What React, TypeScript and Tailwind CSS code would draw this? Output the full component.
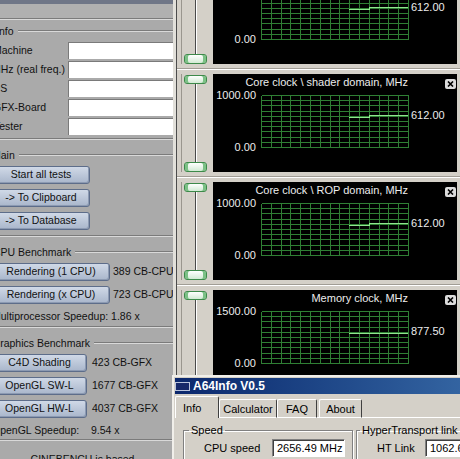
import React from "react"

const ui = "font-['Liberation_Sans',Arial,sans-serif]"

// etched separator line (dark over light)
function Etch() {
  return <div className="h-[2px] border-t border-t-[#7b7b7b] border-b border-b-[#d9d9d9]" />
}

function Heading({ text, cls }: { text: string; cls: string }) {
  return (
    <div className="flex items-center h-[14px] gap-[4px] shrink-0">
      <span className={`whitespace-nowrap leading-[14px] ${cls}`}>{text}</span>
      <div className="flex-1">
        <Etch />
      </div>
    </div>
  )
}

function CbButton({ label, w }: { label: string; w: string }) {
  return (
    <div
      className={`h-[18px] -ml-[8px] ${w} shrink-0 flex items-center justify-center rounded-[3px] border border-[#5d6d8a] bg-linear-to-b from-[#d0d9e7] to-[#a9b6cb] shadow-[inset_-1px_-1px_0_#8c9ab2] whitespace-nowrap`}
    >
      {label}
    </div>
  )
}

const infoRows = [
  { label: "Machine", cls: "-ml-[7px]" },
  { label: "MHz (real freq.)", cls: "-ml-[8px]" },
  { label: "OS", cls: "-ml-[8px]" },
  { label: "GFX-Board", cls: "-ml-[7px]" },
  { label: "Tester", cls: "-ml-[6px]" },
]

function Cinebench() {
  return (
    <div className="w-[173px] shrink-0 bg-[#aaaaaa] text-[#111] text-[10.5px] flex flex-col overflow-hidden">
      <div className="h-[4px] bg-[#6f7687] shrink-0" />
      <div className="h-[14px] bg-[#b0b0b0] shrink-0" />
      <Etch />

      {/* INFO */}
      <div className="mt-[4px]">
        <Heading text="Info" cls="-ml-[4px]" />
      </div>
      <div className="mt-[4px] flex flex-col gap-[2px]">
        {infoRows.map((r) => (
          <div key={r.label} className="flex h-[17px] items-center">
            <div className="w-[68px] overflow-hidden whitespace-nowrap">
              <span className={`inline-block ${r.cls}`}>{r.label}</span>
            </div>
            <div className="flex-1 h-full bg-white border-t border-l border-[#7a7a7a]" />
          </div>
        ))}
      </div>
      <div className="mt-[3px]">
        <Etch />
      </div>

      {/* MAIN */}
      <div className="mt-[8px]">
        <Heading text="Main" cls="-ml-[8px]" />
      </div>
      <div className="mt-[4px] flex flex-col gap-[5px]">
        <CbButton label="Start all tests" w="w-[98px]" />
        <CbButton label="-> To Clipboard" w="w-[98px]" />
        <CbButton label="-> To Database" w="w-[98px]" />
      </div>
      <div className="mt-[5px]">
        <Etch />
      </div>

      {/* CPU */}
      <div className="mt-[8px]">
        <Heading text="CPU Benchmark" cls="-ml-[7px]" />
      </div>
      <div className="mt-[4px] flex flex-col gap-[5px]">
        <div className="flex items-center gap-[3px]">
          <CbButton label="Rendering (1 CPU)" w="w-[118px]" />
          <span className="whitespace-nowrap">389 CB-CPU</span>
        </div>
        <div className="flex items-center gap-[3px]">
          <CbButton label="Rendering (x CPU)" w="w-[118px]" />
          <span className="whitespace-nowrap">723 CB-CPU</span>
        </div>
      </div>
      <div className="mt-[5px] h-[14px] leading-[14px] whitespace-nowrap">
        <span className="inline-block -ml-[8px]">Multiprocessor Speedup: 1.86 x</span>
      </div>
      <div className="mt-[3px]">
        <Etch />
      </div>

      {/* GFX */}
      <div className="mt-[8px]">
        <Heading text="Graphics Benchmark" cls="-ml-[8px]" />
      </div>
      <div className="mt-[4px] flex flex-col gap-[5px]">
        <div className="flex items-center gap-[5px]">
          <CbButton label="C4D Shading" w="w-[95px]" />
          <span className="whitespace-nowrap">423 CB-GFX</span>
        </div>
        <div className="flex items-center gap-[5px]">
          <CbButton label="OpenGL SW-L" w="w-[95px]" />
          <span className="whitespace-nowrap">1677 CB-GFX</span>
        </div>
        <div className="flex items-center gap-[5px]">
          <CbButton label="OpenGL HW-L" w="w-[95px]" />
          <span className="whitespace-nowrap">4037 CB-GFX</span>
        </div>
      </div>
      <div className="mt-[5px] h-[14px] leading-[14px] flex whitespace-nowrap">
        <span className="inline-block -ml-[8px] w-[99px] shrink-0">OpenGL Speedup:</span>
        <span>9.54 x</span>
      </div>
      <div className="mt-[2px]">
        <Etch />
      </div>
      <div className="mt-[11px] h-[14px] leading-[14px] text-center pr-[8px] whitespace-nowrap">
        CINEBENCH is based
      </div>
    </div>
  )
}

// ---------- RivaTuner style monitor ----------

const graphs = [
  { title: "Core clock, MHz", max: "1000.00", value: "612.00", level: 0.612, step: true },
  { title: "Core clock \\ shader domain, MHz", max: "1000.00", value: "612.00", level: 0.612, step: true },
  { title: "Core clock \\ ROP domain, MHz", max: "1000.00", value: "612.00", level: 0.612, step: true },
  { title: "Memory clock, MHz", max: "1500.00", value: "877.50", level: 0.585, step: false },
]

function Chart({ level, step }: { level: number; step: boolean }) {
  const W = 147
  const H = 52
  const y = Math.round(H * (1 - level)) + 0.5
  const pts = step
    ? `88,${y + 2} 108,${y + 2} 108,${y} ${W},${y}`
    : `88,${y} ${W},${y}`
  return (
    <svg width={W + 1} height={H + 1} className="block" shapeRendering="crispEdges">
      {Array.from({ length: 16 }, (_, i) => {
        const x = Math.round((i * W) / 15) + 0.5
        return <line key={"v" + i} x1={x} y1={0.5} x2={x} y2={H + 0.5} stroke="#2f7f34" />
      })}
      {Array.from({ length: 11 }, (_, j) => {
        const yy = Math.round((j * H) / 10) + 0.5
        return <line key={"h" + j} x1={0.5} y1={yy} x2={W + 0.5} y2={yy} stroke="#2f7f34" />
      })}
      <polyline points={pts} fill="none" stroke="#8fe48f" strokeWidth={1} />
    </svg>
  )
}

function CloseBox() {
  return (
    <div className="w-[11px] h-[10px] rounded-[2px] bg-[#dcdcdc] flex items-center justify-center">
      <svg width="7" height="6" viewBox="0 0 7 6">
        <path d="M1 0.5 L6 5.5 M6 0.5 L1 5.5" stroke="#000" strokeWidth="1.6" />
      </svg>
    </div>
  )
}

function Thumb({ h }: { h: string }) {
  return (
    <div
      className={`w-[23px] ${h} shrink-0 rounded-[3px] border border-[#3d8a4a] bg-linear-to-b from-[#ffffff] to-[#d2ead4] shadow-[inset_3px_0_0_#7cc186,inset_-3px_0_0_#7cc186]`}
    />
  )
}

function Slider() {
  return (
    <div className="w-[36px] shrink-0 flex">
      <div className="w-[4px]" />
      <div className="w-[1px] bg-[#9a968e]" />
      <div className="w-[2px]" />
      <div className="w-[23px] flex flex-col items-center pt-[1px]">
        <Thumb h="h-[9px]" />
        <div className="flex-1 w-[2px] border-l border-l-[#4a4a4a] border-r border-r-white" />
        <Thumb h="h-[10px]" />
      </div>
    </div>
  )
}

function Graph({ g }: { g: (typeof graphs)[number] }) {
  return (
    <div className="w-[244px] shrink-0 bg-black text-[#ededed] text-[11px] pt-[2px] flex flex-col">
      <div className="flex h-[12px]">
        <span className="flex-1 text-right leading-[12px] whitespace-nowrap">{g.title}</span>
        <div className="w-[49px] flex justify-end pt-[3px] pr-[1px]">
          <CloseBox />
        </div>
      </div>
      <div className="flex h-[66px]">
        <div className="w-[43px] flex flex-col justify-between items-end leading-[14px]">
          <span>{g.max}</span>
          <span>0.00</span>
        </div>
        <div className="ml-[5px] pt-[7px]">
          <Chart level={g.level} step={g.step} />
        </div>
        <div className="ml-[2px] pt-[20px] leading-[14px]">{g.value}</div>
      </div>
    </div>
  )
}

function Monitor() {
  return (
    <div className="flex-1 flex bg-[#d4d0c8]">
      <div className="w-[3px] bg-[#e2e0da]" />
      <div className="w-[1px] bg-[#4c4c4c]" />
      <div className="flex-1 flex flex-col -mt-[34px]">
        {graphs.map((g) => (
          <React.Fragment key={g.title}>
            <div className="flex h-[98px] shrink-0">
              <Slider />
              <Graph g={g} />
              <div className="w-[3px]" />
            </div>
            <div className="h-[10px] shrink-0 pt-[4px]">
              <div className="h-[2px] border-t border-t-[#a19d95] border-b border-b-white" />
            </div>
          </React.Fragment>
        ))}
      </div>
    </div>
  )
}

// ---------- A64Info window ----------

function Tab({ label, active, w }: { label: string; active?: boolean; w: string }) {
  return (
    <div
      className={
        active
          ? `${w} h-[22px] shrink-0 border-t border-l border-white border-r border-r-[#404040] rounded-t-[2px] pl-[7px] pt-[4px] leading-[14px]`
          : `${w} h-[19px] shrink-0 border-t border-l border-white border-r border-r-[#404040] border-b border-b-white rounded-t-[2px] text-center pt-[2px] leading-[14px]`
      }
    >
      {label}
    </div>
  )
}

function Field({ text, w }: { text: string; w: string }) {
  return (
    <div
      className={`${w} h-[18px] shrink-0 bg-white border-t border-l border-[#808080] border-b border-r border-b-white border-r-white shadow-[inset_1px_1px_0_#404040] pl-[4px] leading-[16px] whitespace-nowrap overflow-hidden`}
    >
      {text}
    </div>
  )
}

function A64Info() {
  return (
    <div className="absolute left-[172px] top-[375px] w-[300px] h-[90px] bg-[#d4d0c8] border-l-2 border-t-2 border-[#f1efea] p-[1px] text-[11px] text-black">
      <div className="h-[16px] flex items-center bg-linear-to-r from-[#0b276c] to-[#3566a3]">
        <div className="w-[15px] h-[9px] border border-[#b9c3dc] bg-[#16286a]" />
        <span className="ml-[3px] text-white font-bold text-[12px] leading-[16px] whitespace-nowrap">
          A64Info V0.5
        </span>
      </div>

      <div className="mt-[2px] flex items-end h-[22px]">
        <Tab label="Info" active w="w-[44px]" />
        <Tab label="Calculator" w="w-[58px]" />
        <Tab label="FAQ" w="w-[40px]" />
        <div className="w-[2px] h-[19px] border-b border-white" />
        <Tab label="About" w="w-[43px]" />
        <div className="flex-1 h-[19px] border-b border-white" />
      </div>

      <div className="flex pl-[8px] mt-[6px] gap-[3px]">
        <fieldset className="w-[170px] h-[40px] shrink-0 border border-[#808080] shadow-[inset_1px_1px_0_#fff,1px_1px_0_#fff]">
          <legend className="ml-[5px] px-[2px] leading-[13px]">Speed</legend>
          <div className="flex items-center mt-[2px]">
            <span className="w-[88px] pl-[20px] whitespace-nowrap">CPU speed</span>
            <Field text="2656.49 MHz" w="w-[73px]" />
          </div>
        </fieldset>
        <fieldset className="w-[200px] h-[40px] shrink-0 border border-[#808080] shadow-[inset_1px_1px_0_#fff,1px_1px_0_#fff]">
          <legend className="ml-[3px] px-[2px] leading-[13px] whitespace-nowrap">HyperTransport link</legend>
          <div className="flex items-center mt-[2px]">
            <span className="w-[68px] pl-[20px] whitespace-nowrap">HT Link</span>
            <Field text="1062.66 MHz" w="w-[80px]" />
          </div>
        </fieldset>
      </div>
    </div>
  )
}

export default function App() {
  return (
    <div className={`relative w-[460px] h-[459px] overflow-hidden flex bg-[#d4d0c8] ${ui}`}>
      <Cinebench />
      <Monitor />
      <A64Info />
    </div>
  )
}
